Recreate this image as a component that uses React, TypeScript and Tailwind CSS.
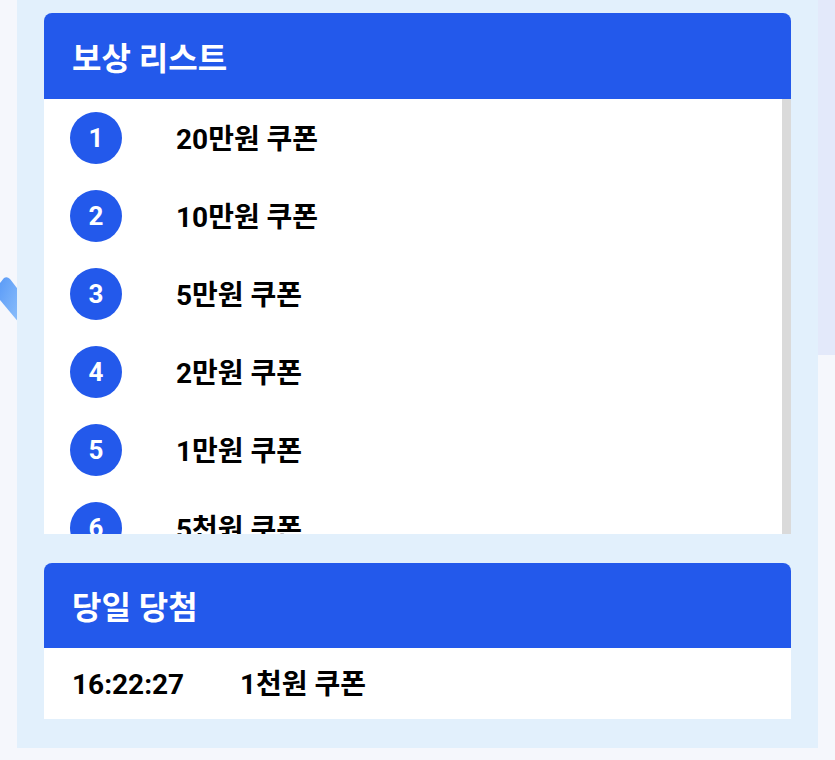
import React from 'react';

const rewards = ['20만원 쿠폰', '10만원 쿠폰', '5만원 쿠폰', '2만원 쿠폰', '1만원 쿠폰', '5천원 쿠폰'];

const font = { fontFamily: 'Roboto, "Noto Sans CJK KR", sans-serif' };

export default function App() {
  return (
    <div className="relative h-[760px] w-[835px] overflow-hidden bg-[#f5f7fc]" style={font}>
      {/* background decorations */}
      <svg className="absolute left-0 top-[274px]" width="20" height="52" viewBox="0 0 20 52">
        <defs>
          <linearGradient id="g" x1="0" y1="0" x2="1" y2="1">
            <stop offset="0" stopColor="#5b9bf7" />
            <stop offset="1" stopColor="#8ec1fb" />
          </linearGradient>
        </defs>
        <path d="M0 9 L4 4 Q7 2 10 5 L20 18 L20 50 L0 26 Z" fill="url(#g)" />
      </svg>
      <div className="absolute right-0 top-0 h-[355px] w-[20px] bg-[#e3e9fa]" />

      <div className="relative mx-[17px] flex h-[748px] flex-col gap-[29px] bg-[#e2f0fc] px-[27px] pt-[13px] pb-[29px]">
        <section className="flex flex-col">
          <div className="flex h-[86px] items-center rounded-t-[8px] bg-[#2359eb] px-[28px] pt-[6px]">
            <h2 className="text-[32px] font-bold text-white">보상 리스트</h2>
          </div>
          <ul className="h-[435px] overflow-hidden border-r-[9px] border-[#dadada] bg-white">
            {rewards.map((r, i) => (
              <li key={r} className="flex h-[78px] shrink-0 items-center pl-[26px]">
                <span className="flex h-[52px] w-[52px] items-center justify-center rounded-full bg-[#2359eb] text-[26px] font-bold text-white">
                  {i + 1}
                </span>
                <span className="ml-[54px] pt-[4px] text-[28px] font-bold text-black">{r}</span>
              </li>
            ))}
          </ul>
        </section>

        <section className="flex flex-col">
          <div className="flex h-[85px] items-center rounded-t-[8px] bg-[#2359eb] px-[28px] pt-[5px]">
            <h2 className="text-[32px] font-bold text-white">당일 당첨</h2>
          </div>
          <div className="flex h-[71px] items-center bg-white pl-[28px] pt-[3px] text-[28px] font-bold text-black">
            <span className="w-[168px]">16:22:27</span>
            <span>1천원 쿠폰</span>
          </div>
        </section>
      </div>
    </div>
  );
}
